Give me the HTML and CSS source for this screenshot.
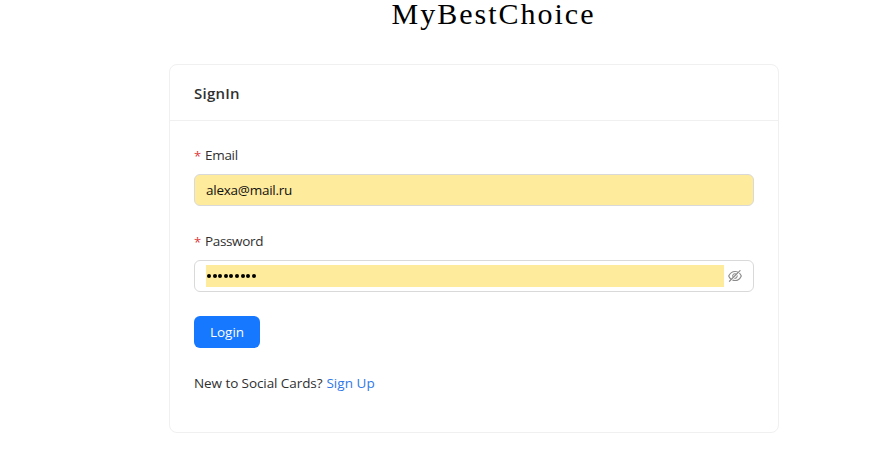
FILE: index.html
```html
<!DOCTYPE html>
<html lang="en">
<head>
<meta charset="utf-8">
<title>MyBestChoice</title>
<link rel="stylesheet" href="styles.css">
</head>
<body>
<h1 class="brand">MyBestChoice</h1>
<main class="card">
  <header class="card-head"><span class="t-title">SignIn</span></header>
  <form class="card-body">
    <label class="label" for="email"><span class="req">*</span><span class="t-email">Email</span></label>
    <div class="field filled"><input id="email" class="input" type="text" value="alexa@mail.ru"></div>
    <label class="label"><span class="req">*</span><span class="t-password">Password</span></label>
    <div class="field last">
      <div class="dots"><i></i><i></i><i></i><i></i><i></i><i></i><i></i><i></i><i></i></div>
      <svg class="eye" viewBox="64 64 896 896" fill="currentColor"><path d="M942.2 486.2Q889.47 375.11 816.7 305l-50.88 50.88C807.31 395.53 843.45 447.4 874.7 512 791.5 684.2 673.4 766 512 766q-72.67 0-133.87-22.38L323 798.75Q408 838 512 838q288.3 0 430.2-300.3a60.29 60.29 0 000-51.5zm-63.57-320.64L836 122.88a8 8 0 00-11.32 0L715.31 232.2Q624.86 186 512 186q-288.3 0-430.2 300.3a60.3 60.3 0 000 51.5q56.69 119.4 136.5 191.41L112.48 835a8 8 0 000 11.31L155.17 889a8 8 0 0011.31 0l712.15-712.12a8 8 0 000-11.32zM149.3 512C232.6 339.8 350.7 258 512 258c54.54 0 104.13 9.36 149.12 28.39l-70.3 70.3a176 176 0 00-238.13 238.13l-83.42 83.42C223.1 637.49 183.3 582.28 149.3 512zm246.7 0a112.11 112.11 0 01146.2-106.69L401.31 546.2A112 112 0 01396 512z"/><path d="M508 624c-3.46 0-6.87-.16-10.25-.47l-52.82 52.82a176.09 176.09 0 00227.42-227.42l-52.82 52.82c.31 3.38.47 6.79.47 10.25a111.94 111.94 0 01-112 112z"/></svg>
    </div>
    <button class="login" type="button"><span class="t-login">Login</span></button>
    <p class="signup"><span class="t-new">New to Social Cards?</span><a class="link">Sign Up</a></p>
  </form>
</main>
</body>
</html>
```
FILE: styles.css
```css
* { box-sizing: border-box; }
body { margin: 0; font: 13.5px/22px "Open Sans", "Noto Sans", sans-serif; color: #303030; background: #fff; }
.brand { margin: 0 0 30px 102px; height: 34px; width: 783px; text-align: center; font: 400 30px/28px "Liberation Serif", serif; letter-spacing: 2px; color: #000; }
.card { width: 610px; height: 369px; margin-left: 169px; border: 1px solid #f0f0f0; border-radius: 8px; }
.card-head { display: flex; align-items: center; height: 56px; padding: 0 24px; border-bottom: 1px solid #f0f0f0; font-weight: 600; font-size: 15px; letter-spacing: .25px; }
.card-body { padding: 23px 24px 24px; }
.label { display: flex; height: 22px; margin-bottom: 8px; }
.req { width: 11px; color: #e0383c; font-size: 13px; padding-top: 1px; }
.t-email { letter-spacing: -.3px; }
.t-password { letter-spacing: -.35px; }
.t-new { letter-spacing: -.08px; }
.field { display: flex; align-items: center; height: 32px; margin-bottom: 24px; padding: 0 11px; border: 1px solid #d9d9d9; border-radius: 6px; }
.filled { background: #ffeb9c; }
.input { flex: 1; min-width: 0; padding: 0; border: 0; outline: 0; background: none; font: inherit; letter-spacing: -.25px; color: #111; }
.dots { display: flex; align-items: center; gap: 1.6px; flex: 1; height: 22px; padding-left: 1px; background: #ffeb9c; }
.dots i { width: 4px; height: 4px; border-radius: 50%; background: #000; }
.eye { width: 14px; height: 14px; margin-left: 4px; color: #8c8c8c; }
.login { display: block; width: 66px; height: 32px; padding: 0; border: 0; border-radius: 6px; background: #1677ff; color: #fff; font: inherit; }
.signup { display: flex; gap: 4px; margin: 24px 0 0; }
.link { color: #2f78e8; letter-spacing: .05px; }
```
